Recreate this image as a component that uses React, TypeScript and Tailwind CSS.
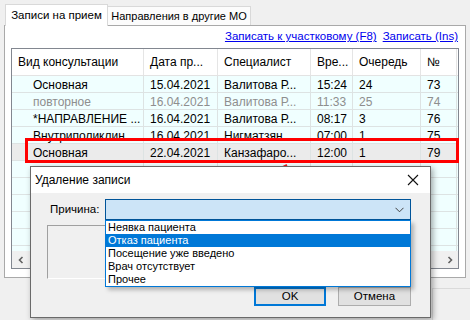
import React from 'react';

const cols = ['w-[132px]', 'w-[74px]', 'w-[93px]', 'w-[42px]', 'w-[68px]', 'w-[36px]'];

const headers = ['Вид консультации', 'Дата пр...', 'Специалист', 'Вре...', 'Очередь', '№'];

const rows = [
  { c: ['Основная', '15.04.2021', 'Валитова Р...', '15:24', '24', '73'], t: 'text-black', bg: 'bg-[#f0ffff]' },
  { c: ['повторное', '16.04.2021', 'Валитова Р...', '11:33', '25', '74'], t: 'text-[#8e8e8e]', bg: 'bg-[#f0ffff]' },
  { c: ['*НАПРАВЛЕНИЕ ...', '16.04.2021', 'Валитова Р...', '08:17', '3', '76'], t: 'text-black', bg: 'bg-[#f0ffff]' },
  { c: ['Внутриполиклин', '16.04.2021', 'Нигматзян', '07:00', '1', '75'], t: 'text-black', bg: 'bg-[#f0ffff]' },
  { c: ['Основная', '22.04.2021', 'Канзафаро...', '12:00', '1', '79'], t: 'text-black', bg: 'bg-[#ebebeb]' },
];

function Row({ cells, t, bg }: { cells: string[]; t: string; bg: string }) {
  return (
    <div className={`flex h-[17px] shrink-0 border-b border-[#dde3e3] ${bg} ${t}`}>
      {cells.map((c, i) => (
        <div
          key={i}
          className={`${cols[i]} shrink-0 flex items-center pt-[1px] overflow-hidden whitespace-nowrap border-r border-[#dde3e3] ${i === 0 ? 'pl-[21px]' : 'pl-[6px]'}`}
        >
          {c}
        </div>
      ))}
    </div>
  );
}

export default function App() {
  return (
    <div className="relative w-[470px] h-[320px] overflow-hidden bg-[#f0f0f0] font-['Liberation_Sans',Arial,sans-serif] text-black">
      {/* Tabs */}
      <div className="flex items-end h-[25px] pl-[5px]">
        <div className="relative z-10 mb-[-1px] h-[22px] w-[103px] border border-b-0 border-[#d9d9d9] bg-white flex items-center justify-center text-[11.5px]">
          Записи на прием
        </div>
        <div className="h-[19px] w-[143px] border border-l-0 border-b-0 border-[#d9d9d9] bg-[#fcfcfc] flex items-center justify-center text-[11px]">
          Направления в другие МО
        </div>
      </div>

      {/* Panel */}
      <div className="mx-[4px] h-[253px] border border-[#a9a9a9] bg-white flex flex-col">
        <div className="h-[22px] flex items-center justify-end gap-[6px] pr-[7px] text-[11.5px] text-[#0000ee]">
          <span className="underline">Записать к участковому (F8)</span>
          <span className="underline">Записать (Ins)</span>
        </div>
        {/* Grid */}
        <div className="mx-[6px] h-[221px] border border-[#828790] flex flex-col text-[12px] overflow-hidden">
          <div className="flex h-[27px] shrink-0 border-b border-[#e3e3e3] bg-white">
            {headers.map((h, i) => (
              <div
                key={i}
                className={`${cols[i]} shrink-0 flex items-center pl-[6px] border-r border-[#e5e5e5] whitespace-nowrap`}
              >
                {h}
              </div>
            ))}
          </div>
          {rows.map((r, i) => (
            <Row key={i} cells={r.c} t={r.t} bg={r.bg} />
          ))}
          <div className="flex-1 overflow-hidden">
            {[0, 1, 2, 3, 4, 5].map((i) => (
              <Row key={i} cells={['', '', '', '', '', '']} t="" bg="bg-[#f0ffff]" />
            ))}
          </div>
          <div className="h-[17px] shrink-0 bg-[#f0f0f0] flex justify-between items-center">
            <div className="w-[17px] h-[17px] flex items-center justify-center">
              <svg width="8" height="8" viewBox="0 0 8 8">
                <path d="M5.5 1 L2.5 4 L5.5 7" fill="none" stroke="#606060" strokeWidth="1.6" />
              </svg>
            </div>
            <div className="w-[17px] h-[17px] flex items-center justify-center">
              <svg width="8" height="8" viewBox="0 0 8 8">
                <path d="M2.5 1 L5.5 4 L2.5 7" fill="none" stroke="#606060" strokeWidth="1.6" />
              </svg>
            </div>
          </div>
        </div>
      </div>

      {/* Bottom area */}
      <div className="flex justify-end pt-[10px]">
        <div className="w-[38px] h-[40px] border border-r-0 border-b-0 border-[#dadada] bg-[#f0f0f0]" />
      </div>

      {/* Red highlight rectangle */}
      <div className="absolute left-[25px] top-[138px] w-[434px] h-[25px] border-[3px] border-[#ff0000]" />

      {/* Red arrow */}
      <svg className="absolute left-0 top-0" width="470" height="320" viewBox="0 0 470 320">
        <line x1="287" y1="165" x2="251" y2="183.5" stroke="#ee1c1c" strokeWidth="2" />
        <polygon points="244,187 254,186.5 250,179" fill="#ee1c1c" />
      </svg>

      {/* Dialog */}
      <div className="absolute left-[30px] top-[166px] w-[401px] h-[152px] border border-[#6a6a6a] bg-[#f0f0f0] shadow-[2px_2px_6px_rgba(0,0,0,0.35)] flex flex-col">
        <div className="h-[26px] shrink-0 bg-white flex items-center justify-between pl-[4px] pr-[11px] text-[12px]">
          <span>Удаление записи</span>
          <svg width="12" height="12" viewBox="0 0 12 12">
            <path d="M1 1 L11 11 M11 1 L1 11" stroke="#111" strokeWidth="1.1" />
          </svg>
        </div>
        <div className="flex items-center mt-[6px] pl-[19px] text-[11.5px]">
          <span className="w-[55px]">Причина:</span>
          <div className="w-[306px] h-[21px] border border-[#005499] bg-[#cce4f7] flex items-center justify-end pr-[6px]">
            <svg width="9" height="6" viewBox="0 0 9 6">
              <path d="M0.5 0.8 L4.5 4.8 L8.5 0.8" fill="none" stroke="#404040" strokeWidth="1" />
            </svg>
          </div>
        </div>
        <div className="ml-[16px] mt-[5px] w-[364px] h-[54px] border border-[#a0a0a0] border-r-white border-b-white" />
        <div className="flex justify-end gap-[12px] pr-[19px] mt-[8px] text-[11.5px]">
          <div className="w-[72px] h-[19px] border-2 border-[#0078d7] bg-[#e1e1e1] flex items-center justify-center">
            OK
          </div>
          <div className="w-[73px] h-[19px] border border-[#adadad] bg-[#e1e1e1] flex items-center justify-center">
            Отмена
          </div>
        </div>

        {/* Dropdown list */}
        <div className="absolute left-[74px] top-[53px] w-[306px] h-[67px] border border-[#0078d7] bg-white shadow-[3px_3px_4px_rgba(0,0,0,0.25)] text-[11px] leading-[13px]">
          <div className="h-[13px] pl-[2px]">Неявка пациента</div>
          <div className="h-[13px] pl-[2px] bg-[#0078d7] text-white">Отказ пациента</div>
          <div className="h-[13px] pl-[2px]">Посещение уже введено</div>
          <div className="h-[13px] pl-[2px]">Врач отсутствует</div>
          <div className="h-[13px] pl-[2px]">Прочее</div>
        </div>
      </div>
    </div>
  );
}
